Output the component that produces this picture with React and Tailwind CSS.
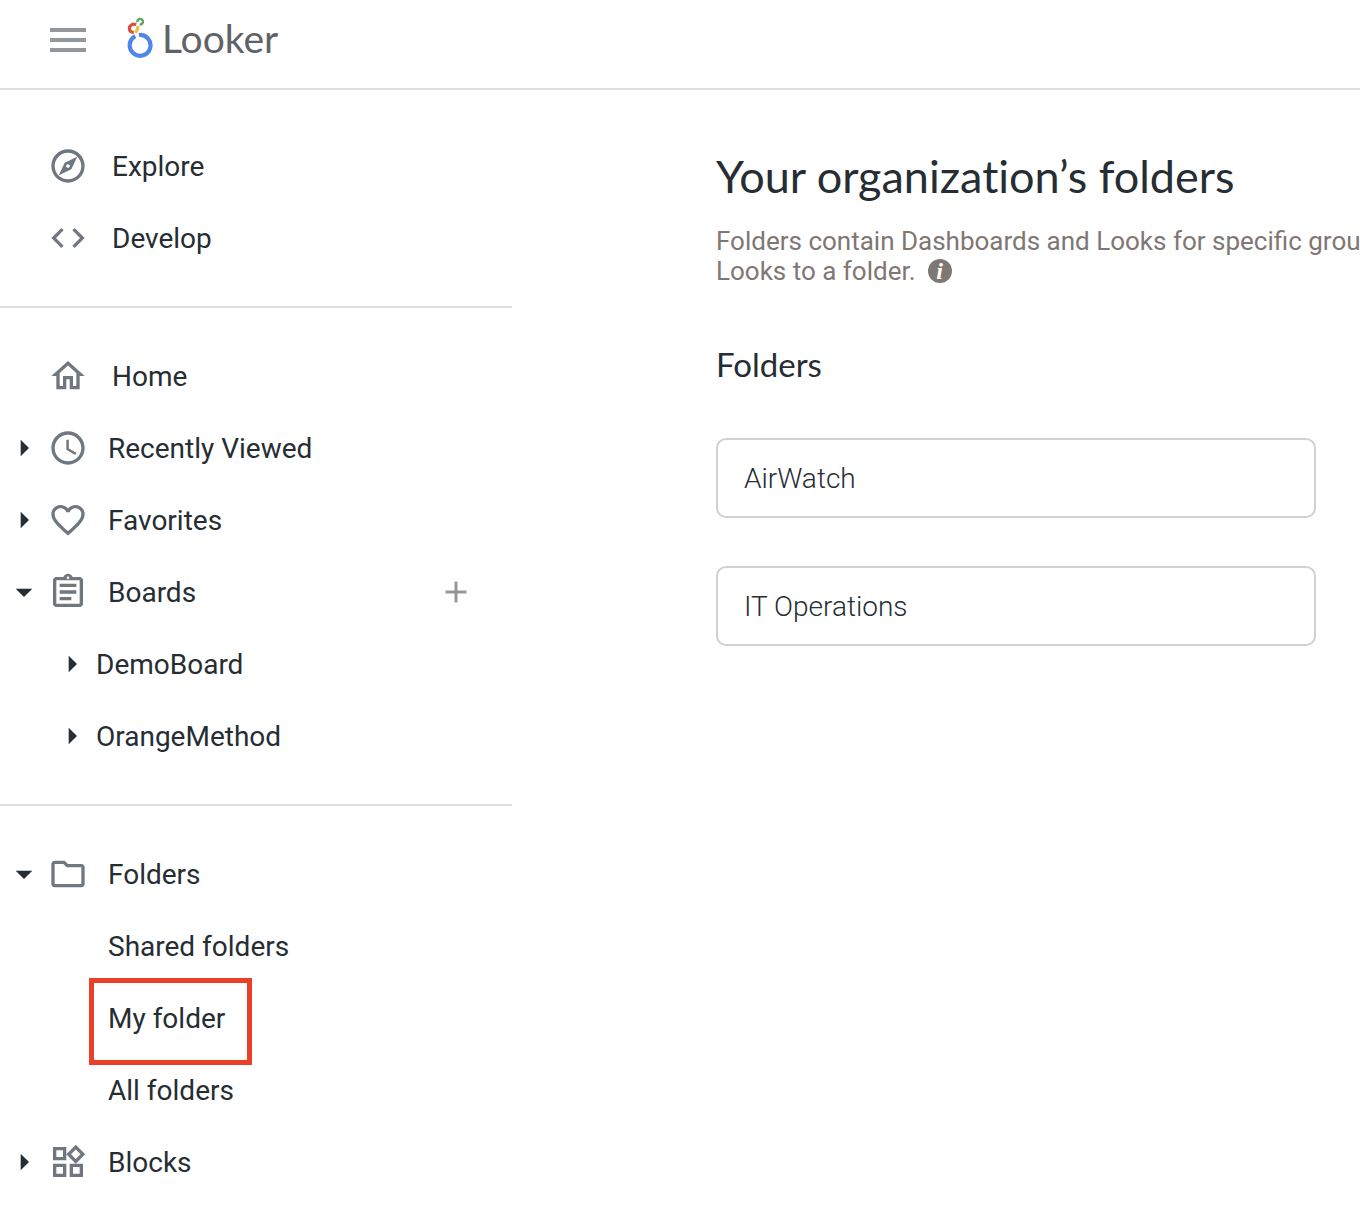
import {
  MdOutlineExplore, MdCode, MdOutlineHome, MdAccessTime, MdFavoriteBorder, MdOutlineAssignment,
  MdOutlineFolder, MdOutlineWidgets, MdArrowRight, MdArrowDropDown, MdAdd,
} from "react-icons/md";

function LookerMark() {
  return (
    <svg width="28" height="42" viewBox="0 0 28 42" fill="none" aria-hidden="true">
      <path d="M12.9 18A10.4 10.4 0 1 1 9.3 19.1" stroke="#4f86ec" strokeWidth="4.2" />
      <path d="M10.2 7.7C6.6 6.2 3.4 8.2 3.4 11.4C3.4 13.6 5 15.2 7.8 15.4" stroke="#d9503f" strokeWidth="3.2" />
      <path d="M11.9 8.9C11.9 11.4 11.1 13.6 9.6 15.8" stroke="#f2bd42" strokeWidth="3.2" />
      <path d="M11.4 5.2A2.8 2.8 0 1 1 13.7 7.4" stroke="#58a55c" strokeWidth="2.4" />
    </svg>
  );
}

function Item({ icon: Icon, label }) {
  return (
    <li>
      <a href="#" className="flex h-18 items-center gap-6 pl-12">
        <Icon className="size-10 shrink-0 text-[#707781]" />
        {label}
      </a>
    </li>
  );
}

function Group({ icon: Icon, label, open = false, onAdd = false, children }) {
  const Arrow = open ? MdArrowDropDown : MdArrowRight;
  return (
    <li>
      <div className="flex h-18 items-center justify-between pr-[38px]">
        <button type="button" aria-expanded={open} className="flex h-18 items-center pl-1">
          <Arrow className="size-10 shrink-0" />
          <Icon className="mr-5 ml-1 size-10 shrink-0 text-[#707781]" />
          {label}
        </button>
        {onAdd && (
          <button type="button" aria-label="Add board" className="text-[#939799]">
            <MdAdd className="size-9" />
          </button>
        )}
      </div>
      {children && <ul>{children}</ul>}
    </li>
  );
}

function Board({ label }) {
  return (
    <li>
      <button type="button" aria-expanded={false} className="flex h-18 items-center gap-1 pl-13">
        <MdArrowRight className="size-10 shrink-0" />
        {label}
      </button>
    </li>
  );
}

function FolderLink({ label, marked = false }) {
  return (
    <li className="relative">
      <a href="#" className="flex h-18 items-center pl-27">{label}</a>
      {marked && (
        <span className="pointer-events-none absolute -top-1 left-[89px] h-[87px] w-[163px] border-5 border-[#eb4027]" />
      )}
    </li>
  );
}

function Card({ label }) {
  return (
    <a href="#" className="flex h-20 items-center rounded-[10px] border-2 border-[#d0d0d0] px-[26px] text-[28px] leading-[33px] font-light">
      {label}
    </a>
  );
}

export default function App() {
  return (
    <div className="min-h-screen overflow-hidden bg-white font-['Roboto',sans-serif] text-[#262d33]">
      <header className="flex h-[90px] items-center border-b-2 border-[#dedfe4] pb-2 pl-[50px]">
        <button type="button" aria-label="Menu" className="flex w-9 flex-col gap-1.5">
          <span className="h-1 bg-[#939799]" />
          <span className="h-1 bg-[#939799]" />
          <span className="h-1 bg-[#939799]" />
        </button>
        <a href="#" className="ml-10 flex items-center gap-2 pb-1 font-['Lato',sans-serif] text-[39px] leading-none text-[#5f6368]">
          <LookerMark />
          Looker
        </a>
      </header>
      <div className="flex">
        <nav className="w-[512px] shrink-0 pt-10 text-[28px] leading-[33px]">
          <ul className="pb-8">
            <Item icon={MdOutlineExplore} label="Explore" />
            <Item icon={MdCode} label="Develop" />
          </ul>
          <ul className="border-t-2 border-[#dedfe4] py-8">
            <Item icon={MdOutlineHome} label="Home" />
            <Group icon={MdAccessTime} label="Recently Viewed" />
            <Group icon={MdFavoriteBorder} label="Favorites" />
            <Group icon={MdOutlineAssignment} label="Boards" open onAdd>
              <Board label="DemoBoard" />
              <Board label="OrangeMethod" />
            </Group>
          </ul>
          <ul className="border-t-2 border-[#dedfe4] pt-8">
            <Group icon={MdOutlineFolder} label="Folders" open>
              <FolderLink label="Shared folders" />
              <FolderLink label="My folder" marked />
              <FolderLink label="All folders" />
            </Group>
            <Group icon={MdOutlineWidgets} label="Blocks" />
          </ul>
        </nav>
        <main className="min-w-0 grow pt-14 pl-51">
          <h1 className="font-['Lato',sans-serif] text-[45px] leading-15 [font-variant-ligatures:none]">Your organization’s folders</h1>
          <p className="mt-5 text-[26px] leading-[30px] whitespace-nowrap text-[#7f7773]">
            Folders contain Dashboards and Looks for specific grou
            <br />
            Looks to a folder.
            <button
              type="button"
              aria-label="About folders"
              className="mt-[3px] ml-3 inline-flex size-6 items-center justify-center rounded-full bg-[#7f7773] align-top font-['Liberation_Serif',serif] text-[24px] leading-6 font-bold text-white italic"
            >
              i
            </button>
          </p>
          <h2 className="mt-14 font-['Lato',sans-serif] text-[33px] leading-11">Folders</h2>
          <div className="mt-13 mr-11 flex max-w-[600px] flex-col gap-12">
            <Card label="AirWatch" />
            <Card label="IT Operations" />
          </div>
        </main>
      </div>
    </div>
  );
}
